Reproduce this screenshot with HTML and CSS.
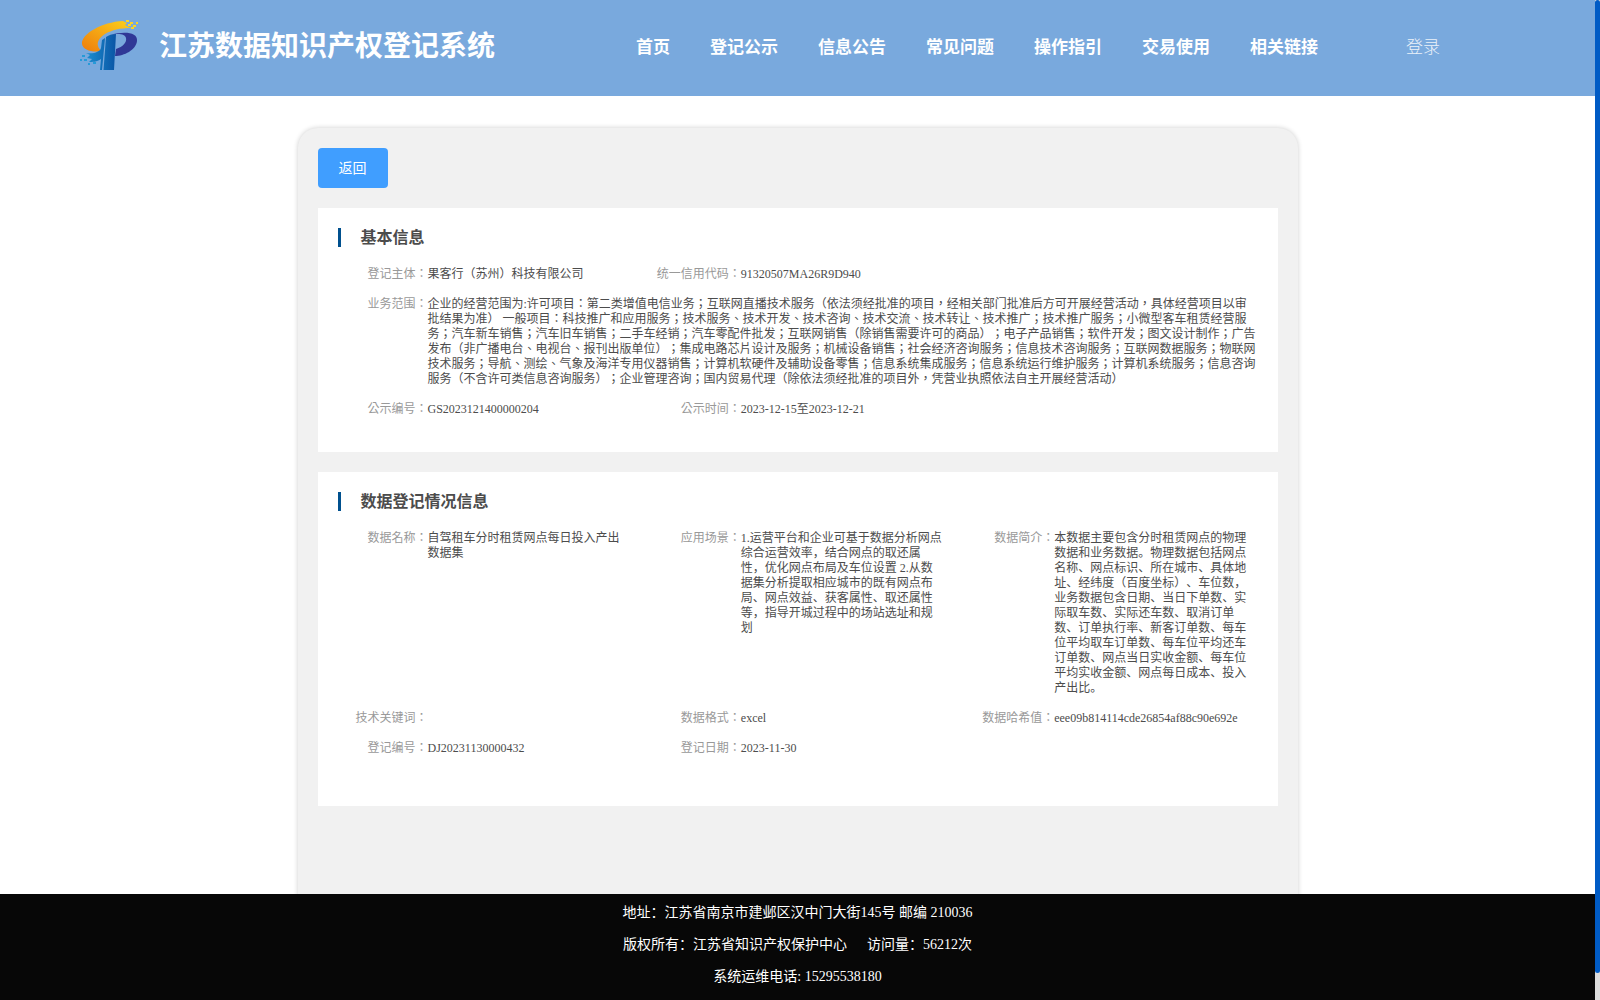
FILE: index.html
```
<!DOCTYPE html>
<html lang="zh-CN">
<head>
<meta charset="utf-8">
<title>江苏数据知识产权登记系统</title>
<link rel="stylesheet" href="styles.css">
</head>
<body>
<div class="page">
  <header class="header">
    <svg class="logo" viewBox="0 0 60 52" width="60" height="52">
      <defs>
        <linearGradient id="orange" x1="0" y1="1" x2="1" y2="0"><stop offset="0" stop-color="#ee7c0c"/><stop offset="1" stop-color="#fcd11c"/></linearGradient>
        <linearGradient id="blue" x1="0" y1="0" x2="1" y2="0"><stop offset="0" stop-color="#1c8fd0"/><stop offset="1" stop-color="#0a55a5"/></linearGradient>
      </defs>
      <path fill="url(#orange)" d="M43 1 47 3 45 5 51 8C40 8 32 10 25 14 19 18 17 22 18 26 19 29 20 30 23 31 12 33 3 30 2 24 1 14 22 2 43 1Z"/>
      <path fill="#fbd426" d="M46 0h3v2h-3zM50 2h3v2h-3zM56 2h2v2h-2zM48 4h3v2h-3zM53 5h3v2h-3zM51 7h3v2h-3z"/>
      <path fill="url(#blue)" d="M25 18 22 50H20L21 39C17 42 12 42 9 42L12 39 7 38 10 35 6 33C14 34 20 32 21 28L22 20ZM26 17C29 15 32 14 36 14L34 50H23.500Z"/>
      <path fill="#303896" d="M30 15C44 11 58 12 57 21 56 30 44 36 35 36L36 29C43 27 47 22 46 18 45 14 39 13 30 15Z"/>
      <path fill="#269bd8" d="M2 35h3v2h-3zM0 39h2v2h-2zM4 39h3v2h-3zM8 43h2v2h-2zM13 42h3v2h-3z"/>
    </svg>
    <h1 class="site-name">江苏数据知识产权登记系统</h1>
    <nav class="nav">
      <a>首页</a><a>登记公示</a><a>信息公告</a><a>常见问题</a><a>操作指引</a><a>交易使用</a><a>相关链接</a>
    </nav>
    <a class="login">登录</a>
  </header>

  <main class="main">
    <div class="panel">
      <button class="back">返回</button>
      <section class="card card-basic">
        <h2 class="card-title">基本信息</h2>
        <div class="grid">
          <div class="item"><span class="label" lang="zh-TW">登记主体：</span><span class="value">果客行（苏州）科技有限公司</span></div>
          <div class="item rest"><span class="label" lang="zh-TW">统一信用代码：</span><span class="value">91320507MA26R9D940</span></div>
          <div class="item full"><span class="label" lang="zh-TW">业务范围：</span><span class="value" lang="zh-TW">企业的经营范围为:许可项目：第二类增值电信业务；互联网直播技术服务（依法须经批准的项目，经相关部门批准后方可开展经营活动，具体经营项目以审批结果为准） 一般项目：科技推广和应用服务；技术服务、技术开发、技术咨询、技术交流、技术转让、技术推广；技术推广服务；小微型客车租赁经营服务；汽车新车销售；汽车旧车销售；二手车经销；汽车零配件批发；互联网销售（除销售需要许可的商品）；电子产品销售；软件开发；图文设计制作；广告发布（非广播电台、电视台、报刊出版单位）；集成电路芯片设计及服务；机械设备销售；社会经济咨询服务；信息技术咨询服务；互联网数据服务；物联网技术服务；导航、测绘、气象及海洋专用仪器销售；计算机软硬件及辅助设备零售；信息系统集成服务；信息系统运行维护服务；计算机系统服务；信息咨询服务（不含许可类信息咨询服务）；企业管理咨询；国内贸易代理（除依法须经批准的项目外，凭营业执照依法自主开展经营活动）</span></div>
          <div class="item"><span class="label" lang="zh-TW">公示编号：</span><span class="value">GS2023121400000204</span></div>
          <div class="item"><span class="label" lang="zh-TW">公示时间：</span><span class="value">2023-12-15至2023-12-21</span></div>
        </div>
      </section>
      <section class="card card-data">
        <h2 class="card-title">数据登记情况信息</h2>
        <div class="grid">
          <div class="item"><span class="label" lang="zh-TW">数据名称：</span><span class="value">自驾租车分时租赁网点每日投入产出数据集</span></div>
          <div class="item"><span class="label" lang="zh-TW">应用场景：</span><span class="value">1.运营平台和企业可基于数据分析网点综合运营效率，结合网点的取还属性，优化网点布局及车位设置 2.从数据集分析提取相应城市的既有网点布局、网点效益、获客属性、取还属性等，指导开城过程中的场站选址和规划</span></div>
          <div class="item"><span class="label" lang="zh-TW">数据简介：</span><span class="value">本数据主要包含分时租赁网点的物理数据和业务数据。物理数据包括网点名称、网点标识、所在城市、具体地址、经纬度（百度坐标）、车位数，业务数据包含日期、当日下单数、实际取车数、实际还车数、取消订单数、订单执行率、新客订单数、每车位平均取车订单数、每车位平均还车订单数、网点当日实收金额、每车位平均实收金额、网点每日成本、投入产出比。</span></div>
          <div class="item"><span class="label" lang="zh-TW">技术关键词：</span><span class="value"></span></div>
          <div class="item"><span class="label" lang="zh-TW">数据格式：</span><span class="value">excel</span></div>
          <div class="item"><span class="label" lang="zh-TW">数据哈希值：</span><span class="value">eee09b814114cde26854af88c90e692e</span></div>
          <div class="item"><span class="label" lang="zh-TW">登记编号：</span><span class="value">DJ20231130000432</span></div>
          <div class="item"><span class="label" lang="zh-TW">登记日期：</span><span class="value">2023-11-30</span></div>
        </div>
      </section>
    </div>
  </main>

  <footer class="footer">
    <p>地址：江苏省南京市建邺区汉中门大街145号 邮编 210036</p>
    <p>版权所有：江苏省知识产权保护中心<span class="visits">访问量：56212次</span></p>
    <p>系统运维电话: 15295538180</p>
  </footer>
</div>
<div class="scroll-track"><div class="scroll-thumb"></div></div>
</body>
</html>
```
FILE: styles.css
```
* { box-sizing: border-box; margin: 0; padding: 0; }

body {
  display: flex;
  width: 1600px;
  height: 1000px;
  overflow: hidden;
  background: #fff;
  font-family: "Liberation Serif", "Noto Sans CJK SC", serif;
  text-spacing-trim: space-all;
}

.page {
  display: flex;
  flex-direction: column;
  width: 1595px;
  height: 1000px;
}

.header {
  display: flex;
  align-items: center;
  height: 96px;
  flex: none;
  padding-left: 80px;
  background: #79a9dd;
  color: #fff;
}

.logo { flex: none; margin-bottom: 5px; }

.site-name {
  width: 336px;
  margin: 0 141px 3px 19px;
  font-size: 28px;
  line-height: 40px;
  font-weight: 700;
  white-space: nowrap;
}

.nav {
  display: flex;
  gap: 40px;
  font-size: 17px;
  line-height: 24px;
  font-weight: 600;
  white-space: nowrap;
}

.login {
  margin-left: 88px;
  font-size: 17px;
  line-height: 24px;
  font-weight: 300;
  opacity: .85;
}

.main {
  flex: 1;
  min-height: 0;
  display: flex;
  justify-content: center;
  padding-top: 32px;
  overflow: hidden;
}

.panel {
  width: 1000px;
  height: 900px;
  padding: 20px;
  border-radius: 20px;
  background: #f1f1f1;
  box-shadow: 0 0 5px rgba(0, 0, 0, .2);
}

.back {
  display: block;
  width: 70px;
  height: 40px;
  padding-bottom: 2px;
  border: 0;
  border-radius: 4px;
  background: #409eff;
  color: #fff;
  font: 14px/38px "Noto Sans CJK SC", sans-serif;
}

.card {
  margin-top: 20px;
  padding: 20px 0 0 20px;
  background: #fff;
  color: #4c4c4c;
}

.card-basic { height: 244px; }
.card-data { height: 334px; }

.card-title {
  height: 19px;
  margin-bottom: 20px;
  padding-left: 20px;
  border-left: 3px solid #00508e;
  font-size: 16px;
  line-height: 20px;
  font-weight: 700;
}

.grid {
  display: grid;
  grid-template-columns: repeat(3, 1fr);
  row-gap: 15px;
  font-size: 12px;
  line-height: 15px;
}

.item { display: flex; padding-right: 20px; }
.full { grid-column: 1 / -1; }
.rest { grid-column: 2 / -1; }

.label {
  flex: none;
  width: 90px;
  color: #999;
  text-align: right;
  white-space: nowrap;
}

.value { flex: 1; min-width: 0; }

.label,
.full .value { font-family: "Liberation Serif", "Noto Sans CJK TC", serif; }

.footer {
  flex: none;
  height: 106px;
  padding-top: 3px;
  background: #070707;
  color: #fff;
  font-size: 14px;
  line-height: 32px;
  text-align: center;
}

.visits { margin-left: 20px; }

.scroll-track { width: 5px; height: 1000px; background: #dcdcdc; }

.scroll-thumb {
  height: 973px;
  border-radius: 3px;
  background: #005bc5;
}
```
